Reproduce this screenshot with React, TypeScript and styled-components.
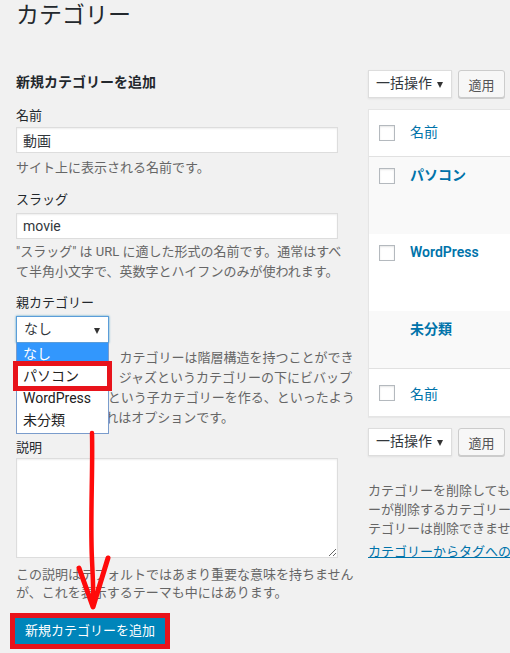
import React from 'react';
import styled, { createGlobalStyle } from 'styled-components';

const GlobalStyle = createGlobalStyle`
  * { box-sizing: border-box; }
  html, body { margin: 0; padding: 0; background: #f1f1f1; }
  body {
    width: 510px;
    height: 653px;
    overflow: hidden;
    font-family: Roboto, "Noto Sans CJK JP", sans-serif;
    font-size: 13px;
    color: #444;
  }
`;

const Page = styled.div`
  position: relative;
  width: 510px;
  height: 653px;
  overflow: hidden;
  padding-left: 16px;
`;

const Title = styled.h1`
  margin: 0;
  padding-top: 1px;
  font-size: 23px;
  font-weight: 400;
  line-height: 29px;
  color: #23282d;
`;

const Columns = styled.div`
  display: flex;
  margin-top: 30px;
`;

const FormColumn = styled.div`
  width: 338px;
  flex-shrink: 0;
`;

const ListColumn = styled.div`
  width: 420px;
  flex-shrink: 0;
  margin-left: 14px;
`;

const FormTitle = styled.h2`
  margin: 12px 0 0;
  font-size: 14px;
  line-height: 20px;
  font-weight: 600;
  color: #23282d;
`;

const Field = styled.div<{ $gap: number }>`
  margin-top: ${(p) => p.$gap}px;
`;

const Label = styled.label`
  display: block;
  font-size: 13px;
  line-height: 18px;
  color: #23282d;
`;

const TextInput = styled.input<{ $top: number }>`
  display: block;
  width: 322px;
  height: 26px;
  margin: ${(p) => p.$top}px 0 0;
  padding: 0 6px;
  border: 1px solid #ddd;
  background: #fff;
  box-shadow: inset 0 1px 2px rgba(0, 0, 0, 0.07);
  font-family: Roboto, "Noto Sans CJK JP", sans-serif;
  font-size: 14px;
  color: #32373c;
  outline: none;
`;

const TextArea = styled.textarea`
  display: block;
  width: 322px;
  height: 100px;
  margin: 1px 0 0;
  border: 1px solid #ddd;
  background: #fff;
  box-shadow: inset 0 1px 2px rgba(0, 0, 0, 0.07);
  outline: none;
`;

const Help = styled.p<{ $top: number; $line?: number }>`
  margin: ${(p) => p.$top}px 0 0;
  font-size: 13px;
  line-height: ${(p) => p.$line ?? 20}px;
  color: #666;
  white-space: nowrap;
`;

const SelectWrap = styled.div`
  position: relative;
  margin-top: 4px;
`;

const SelectBox = styled.div<{ $width: number; $focused?: boolean }>`
  position: relative;
  width: ${(p) => p.$width}px;
  height: ${(p) => (p.$focused ? 27 : 28)}px;
  padding-left: 7px;
  border: 1px solid ${(p) => (p.$focused ? '#5b9dd9' : '#ddd')};
  background: #fff;
  box-shadow: ${(p) => (p.$focused ? '0 0 2px rgba(30, 140, 190, 0.8)' : '0 1px 2px rgba(0, 0, 0, 0.07)')};
  font-size: 14px;
  line-height: 25px;
  color: #32373c;

  &::after {
    content: '';
    position: absolute;
    right: 8px;
    top: 11px;
    border-left: 3.5px solid transparent;
    border-right: 3.5px solid transparent;
    border-top: 6px solid #333;
  }
`;

const OptionList = styled.ul`
  position: absolute;
  left: 0;
  top: 27px;
  width: 93px;
  margin: 0;
  padding: 0 0 2px;
  list-style: none;
  background: #fff;
  border: 1px solid #7a9ccc;
  border-top: none;
`;

const Option = styled.li<{ $active?: boolean; $marked?: boolean }>`
  position: relative;
  height: 22px;
  padding-left: 6px;
  font-size: 14px;
  line-height: 22px;
  color: ${(p) => (p.$active ? '#fff' : '#222')};
  background: ${(p) => (p.$active ? '#3297fd' : 'transparent')};

  ${(p) =>
    p.$marked &&
    `
    &::after {
      content: '';
      position: absolute;
      left: -4px;
      right: -4px;
      top: -4px;
      bottom: -4px;
      border: 5px solid #e8131b;
    }
  `}
`;

const SubmitFrame = styled.div`
  display: inline-block;
  margin: 11px 0 0 -6px;
  border: 5px solid #e8131b;
`;

const PrimaryButton = styled.button`
  display: block;
  height: 26px;
  padding: 0 10px;
  border: none;
  background: #0085ba;
  color: #fff;
  font-family: Roboto, "Noto Sans CJK JP", sans-serif;
  font-size: 13px;
  line-height: 26px;
`;

const BulkRow = styled.div<{ $top: number }>`
  display: flex;
  gap: 6px;
  margin-top: ${(p) => p.$top}px;
`;

const ApplyButton = styled.button`
  width: 47px;
  height: 28px;
  padding: 0;
  border: 1px solid #ccc;
  border-radius: 3px;
  background: #f7f7f7;
  box-shadow: 0 1px 0 #ccc;
  color: #555;
  font-family: Roboto, "Noto Sans CJK JP", sans-serif;
  font-size: 13px;
`;

const ListTable = styled.div`
  margin-top: 11px;
  border: 1px solid #e5e5e5;
  background: #fff;
  box-shadow: 0 1px 1px rgba(0, 0, 0, 0.04);
`;

const Row = styled.div<{ $height: number; $striped?: boolean; $edge?: 'head' | 'foot' }>`
  display: flex;
  height: ${(p) => p.$height}px;
  background: ${(p) => (p.$striped ? '#f9f9f9' : '#fff')};
  border-bottom: ${(p) => (p.$edge === 'head' ? '1px solid #e1e1e1' : 'none')};
  border-top: ${(p) => (p.$edge === 'foot' ? '1px solid #e1e1e1' : 'none')};
`;

const CheckCell = styled.div<{ $top: number }>`
  width: 41px;
  flex-shrink: 0;
  padding: ${(p) => p.$top}px 0 0 10px;
`;

const CheckBox = styled.span`
  display: block;
  width: 16px;
  height: 16px;
  border: 1px solid #b4b9be;
  background: #fff;
  box-shadow: inset 0 1px 2px rgba(0, 0, 0, 0.1);
`;

const NameCell = styled.div<{ $top: number; $strong?: boolean }>`
  padding-top: ${(p) => p.$top}px;
  font-size: 14px;
  line-height: 20px;
  font-weight: ${(p) => (p.$strong ? 600 : 400)};
  color: #0073aa;
`;

const Note = styled.p`
  margin: 25px 0 0;
  font-size: 13px;
  line-height: 19px;
  color: #666;
  white-space: nowrap;
`;

const NoteLink = styled.a`
  display: block;
  margin-top: 4px;
  font-size: 13px;
  line-height: 19px;
  color: #0073aa;
  text-decoration: underline;
  white-space: nowrap;
`;

const Annotation = styled.svg`
  position: absolute;
  left: 0;
  top: 0;
  pointer-events: none;
`;

type Term = { name: string; height: number; striped: boolean; check: boolean };

const terms: Term[] = [
  { name: 'パソコン', height: 77, striped: true, check: true },
  { name: 'WordPress', height: 77, striped: false, check: true },
  { name: '未分類', height: 57, striped: true, check: false },
];

const Bulk = ({ top }: { top: number }) => (
  <BulkRow $top={top}>
    <SelectBox $width={84}>一括操作</SelectBox>
    <ApplyButton>適用</ApplyButton>
  </BulkRow>
);

const App = () => {
  return (
    <Page>
      <GlobalStyle />
      <Title>カテゴリー</Title>
      <Columns>
        <FormColumn>
          <FormTitle>新規カテゴリーを追加</FormTitle>

          <Field $gap={15}>
            <Label>名前</Label>
            <TextInput $top={2} defaultValue="動画" />
            <Help $top={5}>サイト上に表示される名前です。</Help>
          </Field>

          <Field $gap={13}>
            <Label>スラッグ</Label>
            <TextInput $top={4} defaultValue="movie" />
            <Help $top={3}>
              "スラッグ" は URL に適した形式の名前です。通常はすべ
              <br />
              て半角小文字で、英数字とハイフンのみが使われます。
            </Help>
          </Field>

          <Field $gap={12}>
            <Label>親カテゴリー</Label>
            <SelectWrap>
              <SelectBox $width={93} $focused>なし</SelectBox>
              <Help $top={5}>
                タグとは異なり、カテゴリーは階層構造を持つことができ
                <br />
                ます。たとえば、ジャズというカテゴリーの下にビバップ
                <br />
                やビッグバンドという子カテゴリーを作る、といったよう
                <br />
                なことです。これはオプションです。
              </Help>
              <OptionList>
                <Option $active>なし</Option>
                <Option $marked>パソコン</Option>
                <Option>WordPress</Option>
                <Option>未分類</Option>
              </OptionList>
            </SelectWrap>
          </Field>

          <Field $gap={11}>
            <Label>説明</Label>
            <TextArea />
            <Help $top={8} $line={18}>
              この説明はデフォルトではあまり重要な意味を持ちません
              <br />
              が、これを表示するテーマも中にはあります。
            </Help>
          </Field>

          <SubmitFrame>
            <PrimaryButton>新規カテゴリーを追加</PrimaryButton>
          </SubmitFrame>
        </FormColumn>

        <ListColumn>
          <Bulk top={10} />
          <ListTable>
            <Row $height={47} $edge="head">
              <CheckCell $top={15}>
                <CheckBox />
              </CheckCell>
              <NameCell $top={12}>名前</NameCell>
            </Row>
            {terms.map((t) => (
              <Row key={t.name} $height={t.height} $striped={t.striped}>
                <CheckCell $top={11}>{t.check && <CheckBox />}</CheckCell>
                <NameCell $top={8} $strong>
                  {t.name}
                </NameCell>
              </Row>
            ))}
            <Row $height={48} $edge="foot">
              <CheckCell $top={16}>
                <CheckBox />
              </CheckCell>
              <NameCell $top={15}>名前</NameCell>
            </Row>
          </ListTable>
          <Bulk top={11} />
          <Note>
            カテゴリーを削除しても、投稿は削除されません。その代わり、ユーザ
            <br />
            ーが削除するカテゴリーのみに属していた投稿は、デフォルトカ
            <br />
            テゴリーは削除できません。
          </Note>
          <NoteLink href="#">カテゴリーからタグへの変換ツール</NoteLink>
        </ListColumn>
      </Columns>

      <Annotation width="510" height="653" viewBox="0 0 510 653">
        <path
          d="M92 433 C93 470, 90 520, 92 560 S93 595, 93 606"
          fill="none"
          stroke="#ff0a0a"
          strokeWidth="4.5"
          strokeLinecap="round"
        />
        <path
          d="M79 568 L93 607 L108 558"
          fill="none"
          stroke="#ff0a0a"
          strokeWidth="5"
          strokeLinecap="round"
          strokeLinejoin="round"
        />
      </Annotation>
    </Page>
  );
};

export default App;
